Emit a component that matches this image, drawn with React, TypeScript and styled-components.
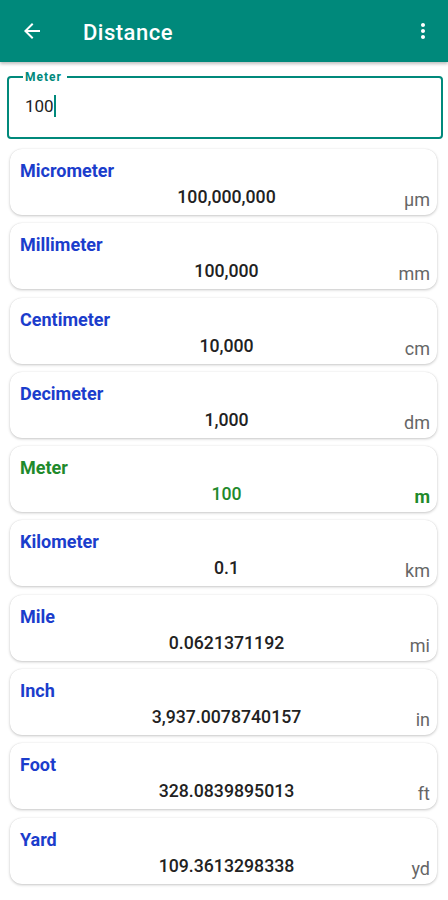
import * as React from 'react';
import styled, { createGlobalStyle } from 'styled-components';

const TEAL = '#00897b';

const GlobalStyle = createGlobalStyle`
	html, body {
		margin: 0;
		padding: 0;
		background: #ffffff;
		font-family: Roboto, 'Liberation Sans', sans-serif;
	}
	* {
		box-sizing: border-box;
	}
`;

const Page = styled.div`
	width: 448px;
	min-height: 900px;
	background: #ffffff;
`;

const Toolbar = styled.header`
	height: 62px;
	background: ${TEAL};
	display: flex;
	align-items: center;
	padding: 0 13px 0 20px;
	box-shadow: 0 2px 3px rgba(0, 0, 0, 0.25);
`;

const IconButton = styled.span`
	display: flex;
	align-items: center;
	justify-content: center;
	width: 24px;
	height: 24px;
	svg {
		fill: #ffffff;
	}
`;

const Title = styled.h1`
	flex: 1;
	margin: 2px 0 0 39px;
	color: #ffffff;
	font-size: 22px;
	font-weight: 500;
	letter-spacing: 0.5px;
`;

const Content = styled.main`
	padding: 9px 5px 0 7px;
`;

const InputBox = styled.fieldset`
	margin: 0;
	height: 68px;
	border: 2px solid ${TEAL};
	border-radius: 4px;
	padding: 0 0 0 16px;
	legend {
		margin-left: -2px;
		padding: 0 5px 0 2px;
		color: ${TEAL};
		font-size: 12px;
		font-weight: 700;
		letter-spacing: 1px;
		line-height: 12px;
	}
`;

const InputValue = styled.div`
	display: flex;
	align-items: center;
	margin-top: 12px;
	font-size: 17px;
	color: #222222;
	line-height: 22px;
`;

const Caret = styled.span`
	display: inline-block;
	width: 2px;
	height: 22px;
	background: ${TEAL};
`;

const List = styled.div`
	display: flex;
	flex-direction: column;
	gap: 8.3px;
	padding: 10px 11px 20px 10px;
`;

const Card = styled.div`
	height: 66px;
	background: #ffffff;
	border-radius: 12px;
	box-shadow: 0 1px 3px rgba(0, 0, 0, 0.22), 0 0 1px rgba(0, 0, 0, 0.12);
	padding: 11px 7px 0 10px;
	display: flex;
	flex-direction: column;
	gap: 4px;
`;

const UnitName = styled.div<{ $active?: boolean }>`
	font-size: 18px;
	font-weight: 700;
	line-height: 22px;
	color: ${(p) => (p.$active ? '#1f8a2c' : '#1b3dcc')};
`;

const ValueRow = styled.div`
	display: grid;
	grid-template-columns: 1fr auto 1fr;
	align-items: end;
	line-height: 22px;
	font-size: 17.7px;
`;

const Value = styled.span<{ $active?: boolean }>`
	grid-column: 2;
	font-weight: 500;
	color: ${(p) => (p.$active ? '#1f8a2c' : '#222222')};
	margin-left: 3px;
`;

const Symbol = styled.span<{ $active?: boolean }>`
	grid-column: 3;
	justify-self: end;
	position: relative;
	top: 3px;
	font-size: 18px;
	font-weight: ${(p) => (p.$active ? 700 : 400)};
	color: ${(p) => (p.$active ? '#1f8a2c' : '#666666')};
`;

interface IUnitRow {
	name: string;
	value: string;
	symbol: string;
	active?: boolean;
}

const UNITS: IUnitRow[] = [
	{ name: 'Micrometer', value: '100,000,000', symbol: 'µm' },
	{ name: 'Millimeter', value: '100,000', symbol: 'mm' },
	{ name: 'Centimeter', value: '10,000', symbol: 'cm' },
	{ name: 'Decimeter', value: '1,000', symbol: 'dm' },
	{ name: 'Meter', value: '100', symbol: 'm', active: true },
	{ name: 'Kilometer', value: '0.1', symbol: 'km' },
	{ name: 'Mile', value: '0.0621371192', symbol: 'mi' },
	{ name: 'Inch', value: '3,937.0078740157', symbol: 'in' },
	{ name: 'Foot', value: '328.0839895013', symbol: 'ft' },
	{ name: 'Yard', value: '109.3613298338', symbol: 'yd' },
];

const UnitCard: React.FC<{ unit: IUnitRow }> = ({ unit }) => (
	<Card>
		<UnitName $active={unit.active}>{unit.name}</UnitName>
		<ValueRow>
			<Value $active={unit.active}>{unit.value}</Value>
			<Symbol $active={unit.active}>{unit.symbol}</Symbol>
		</ValueRow>
	</Card>
);

const App: React.FC = () => {
	return (
		<Page>
			<GlobalStyle />
			<Toolbar>
				<IconButton>
					<svg width="24" height="24" viewBox="0 0 24 24">
						<path d="M20 11H7.83l5.59-5.59L12 4l-8 8 8 8 1.41-1.41L7.83 13H20v-2z" />
					</svg>
				</IconButton>
				<Title>Distance</Title>
				<IconButton>
					<svg width="24" height="24" viewBox="0 0 24 24">
						<path d="M12 8c1.1 0 2-.9 2-2s-.9-2-2-2-2 .9-2 2 .9 2 2 2zm0 2c-1.1 0-2 .9-2 2s.9 2 2 2 2-.9 2-2-.9-2-2-2zm0 6c-1.1 0-2 .9-2 2s.9 2 2 2 2-.9 2-2-.9-2-2-2z" />
					</svg>
				</IconButton>
			</Toolbar>
			<Content>
				<InputBox>
					<legend>Meter</legend>
					<InputValue>
						100
						<Caret />
					</InputValue>
				</InputBox>
			</Content>
			<List>
				{UNITS.map((u) => (
					<UnitCard key={u.name} unit={u} />
				))}
			</List>
		</Page>
	);
};

export default App;
